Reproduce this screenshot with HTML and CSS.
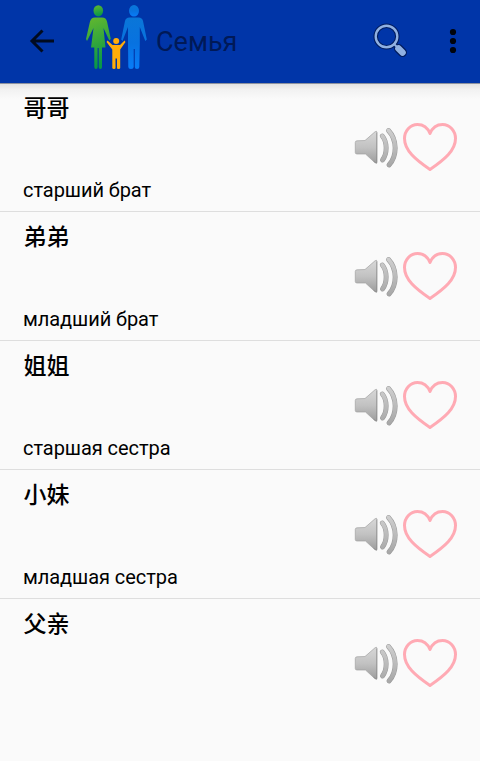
FILE: index.html
```
<!DOCTYPE html>
<html lang="ru">
<head>
<meta charset="utf-8">
<title>Семья</title>
<link rel="stylesheet" href="styles.css">
</head>
<body>
<svg class="defs" width="0" height="0" aria-hidden="true">
  <defs>
    <linearGradient id="metal" x1="0" y1="0" x2="0" y2="1">
      <stop offset="0" stop-color="#d8d8d8"/><stop offset=".5" stop-color="#c2c2c2"/><stop offset="1" stop-color="#9c9c9c"/>
    </linearGradient>
    <linearGradient id="wave" gradientUnits="userSpaceOnUse" x1="0" y1="3" x2="0" y2="44">
      <stop offset="0" stop-color="#d0d0d0"/><stop offset="1" stop-color="#a4a4a4"/>
    </linearGradient>
    <linearGradient id="green" x1="0" y1="0" x2=".2" y2="1">
      <stop offset="0" stop-color="#65b82e"/><stop offset="1" stop-color="#089848"/>
    </linearGradient>
    <linearGradient id="blue" x1="0" y1="0" x2="0" y2="1">
      <stop offset="0" stop-color="#0a76d8"/><stop offset=".5" stop-color="#0872e0"/><stop offset="1" stop-color="#087cf8"/>
    </linearGradient>
    <symbol id="speaker" viewBox="0 0 48 48">
      <path d="M3.300 17.500Q3.300 15.800 5 15.800L13 15.500L23 6.800Q25 5.500 25 7.500V37Q25 39 23 37.800L13.500 29H5Q3.300 29 3.300 27.500Z" fill="url(#metal)" stroke="#a2a2a2" stroke-width=".7"/>
      <path d="M24.700 7.500V38.200L21.500 36.200" fill="none" stroke="#808080" stroke-opacity=".5" stroke-width="1"/>
      <g fill="none" stroke-linecap="round">
        <path d="M30.300 11C35.300 17 35.500 28.500 30.500 35M36.500 5.500C45.300 15 45.300 31 37 40" stroke="#999" stroke-width="4.900"/>
        <path d="M30.300 11C35.300 17 35.500 28.500 30.500 35M36.500 5.500C45.300 15 45.300 31 37 40" stroke="url(#wave)" stroke-width="3.900"/>
      </g>
    </symbol>
    <symbol id="heart" viewBox="0 0 54 48">
      <path d="M27 10.500C24.500 4.500 19.500 1.500 14.500 1.500C7 1.500 1.500 8 1.500 15.500C1.500 27.500 12.500 36.500 27 46.500C41.500 36.500 52.500 27.500 52.500 15.500C52.500 8 47 1.500 39.500 1.500C34.500 1.500 29.500 4.500 27 10.500Z" fill="none" stroke="#ffaab4" stroke-width="3" stroke-linejoin="round"/>
    </symbol>
  </defs>
</svg>

<header class="toolbar">
  <svg class="back" viewBox="0 0 26 26"><path d="M25 13H3M13.500 2.500L3 13L13.500 23.500" fill="none" stroke="#000b20" stroke-width="3"/></svg>
  <svg class="family" viewBox="0 0 64 70">
    <g fill="url(#green)">
      <ellipse cx="13.300" cy="10.800" rx="4.800" ry="5.600"/>
      <path d="M10 17.500H17C20 17.500 21.300 19 22 21.500L25.800 39L24.300 40.500L18.500 28L20.500 47.500H17V67Q17 69 15.400 69T13.700 67V48H12.600V67Q12.600 69 11 69T9.300 67V47.500H6L8.500 28L2 41L1 39L5 21.500C6 19 7 17.500 10 17.500Z"/>
    </g>
    <g fill="url(#blue)">
      <ellipse cx="49" cy="10.800" rx="5" ry="5.800"/>
      <path d="M44.500 17.500H53.500C56 17.500 57.500 19 58 21L61.800 39.500L60.300 41L54.800 27V44L54.300 67Q54.300 69 52 69T49.800 67V49H48.700V67Q48.700 69 46 69T43.300 67L43 44V27L37.500 41L36.200 39.500L40 21C40.500 19 42 17.500 44.500 17.500Z"/>
    </g>
    <g fill="#ffad0a">
      <circle cx="31.200" cy="41" r="3"/>
      <path d="M22.500 40.500L27.500 45H35L39.500 40.500L40.500 42L35.200 49.500V68Q35.200 69 33.500 69T32 68V58.500H30.500V68Q30.500 69 29 69T27.300 68V49.500L21.500 42Z"/>
    </g>
  </svg>
  <h1 class="title">Семья</h1>
  <svg class="search" viewBox="0 0 38 38">
    <g fill="none" stroke="#001c5d" stroke-linecap="round">
      <circle cx="14.500" cy="14.500" r="10.800" stroke-width="4.500"/>
      <path d="M22 22L25 25" stroke-width="4"/><path d="M26.500 26.500L30.500 30.500" stroke-width="9"/>
    </g>
    <g fill="none" stroke="#8fb0e2" stroke-linecap="round">
      <circle cx="14.500" cy="14.500" r="10.800" stroke-width="2.400"/>
      <path d="M22 22L25 25" stroke-width="2"/><path d="M26.500 26.500L30.500 30.500" stroke-width="6.600"/>
    </g>
  </svg>
  <svg class="more" viewBox="0 0 8 26"><circle cx="4" cy="4" r="3.100"/><circle cx="4" cy="13" r="3.100"/><circle cx="4" cy="22" r="3.100"/></svg>
</header>

<main class="list">
  <article class="row">
    <div class="words"><h2 class="hanzi" lang="zh">哥哥</h2><p class="meaning">старший брат</p></div>
    <svg class="speaker"><use href="#speaker"/></svg><svg class="heart"><use href="#heart"/></svg>
  </article>
  <article class="row">
    <div class="words"><h2 class="hanzi" lang="zh">弟弟</h2><p class="meaning">младший брат</p></div>
    <svg class="speaker"><use href="#speaker"/></svg><svg class="heart"><use href="#heart"/></svg>
  </article>
  <article class="row">
    <div class="words"><h2 class="hanzi" lang="zh">姐姐</h2><p class="meaning">старшая сестра</p></div>
    <svg class="speaker"><use href="#speaker"/></svg><svg class="heart"><use href="#heart"/></svg>
  </article>
  <article class="row">
    <div class="words"><h2 class="hanzi" lang="zh">小妹</h2><p class="meaning">младшая сестра</p></div>
    <svg class="speaker"><use href="#speaker"/></svg><svg class="heart"><use href="#heart"/></svg>
  </article>
  <article class="row">
    <div class="words"><h2 class="hanzi" lang="zh">父亲</h2></div>
    <svg class="speaker"><use href="#speaker"/></svg><svg class="heart"><use href="#heart"/></svg>
  </article>
</main>
</body>
</html>
```

FILE: styles.css
```
* { box-sizing: border-box; }
body {
  margin: 0;
  height: 761px;
  overflow: hidden;
  background: #fafafa;
  color: #000;
  font-family: Roboto, "Noto Sans CJK SC", sans-serif;
}
.defs { position: absolute; }
svg { display: block; flex: none; }
.toolbar {
  display: flex;
  align-items: flex-start;
  height: 83px;
  padding-left: 29px;
  background: #0035a8;
}
.back { width: 26px; height: 26px; margin-top: 28px; }
.family { width: 64px; height: 70px; margin-left: 30px; }
.title {
  flex: 1;
  margin: 25px 0 0 7px;
  font-size: 27px;
  font-weight: 400;
  line-height: 34px;
  color: #001957;
}
.search { width: 38px; height: 38px; margin-top: 22px; }
.more { width: 8px; height: 26px; margin: 28px 23px 0 39px; fill: #00040c; }
.list {
  height: 678px;
  background: linear-gradient(#8d929f 0 1px, #e2e2e2 1px, #f2f2f2 7px, #fafafa 16px);
}
.row {
  display: flex;
  height: 129px;
  padding: 0 23px;
  border-bottom: 1px solid #dedede;
}
.row:last-child { border-bottom: 0; }
.words {
  flex: 1;
  display: flex;
  flex-direction: column;
  justify-content: space-between;
  padding: 10px 0 8px;
}
.hanzi {
  margin: 0;
  padding-left: 0.5px;
  font-size: 23px;
  font-weight: 500;
  line-height: 32px;
}
.meaning {
  margin: 0;
  font-size: 20px;
  line-height: 26px;
  letter-spacing: -0.06px;
}
.speaker { width: 48px; height: 48px; margin-top: 42px; }
.heart { width: 54px; height: 48px; margin: 40px 0 0 3px; }
```
